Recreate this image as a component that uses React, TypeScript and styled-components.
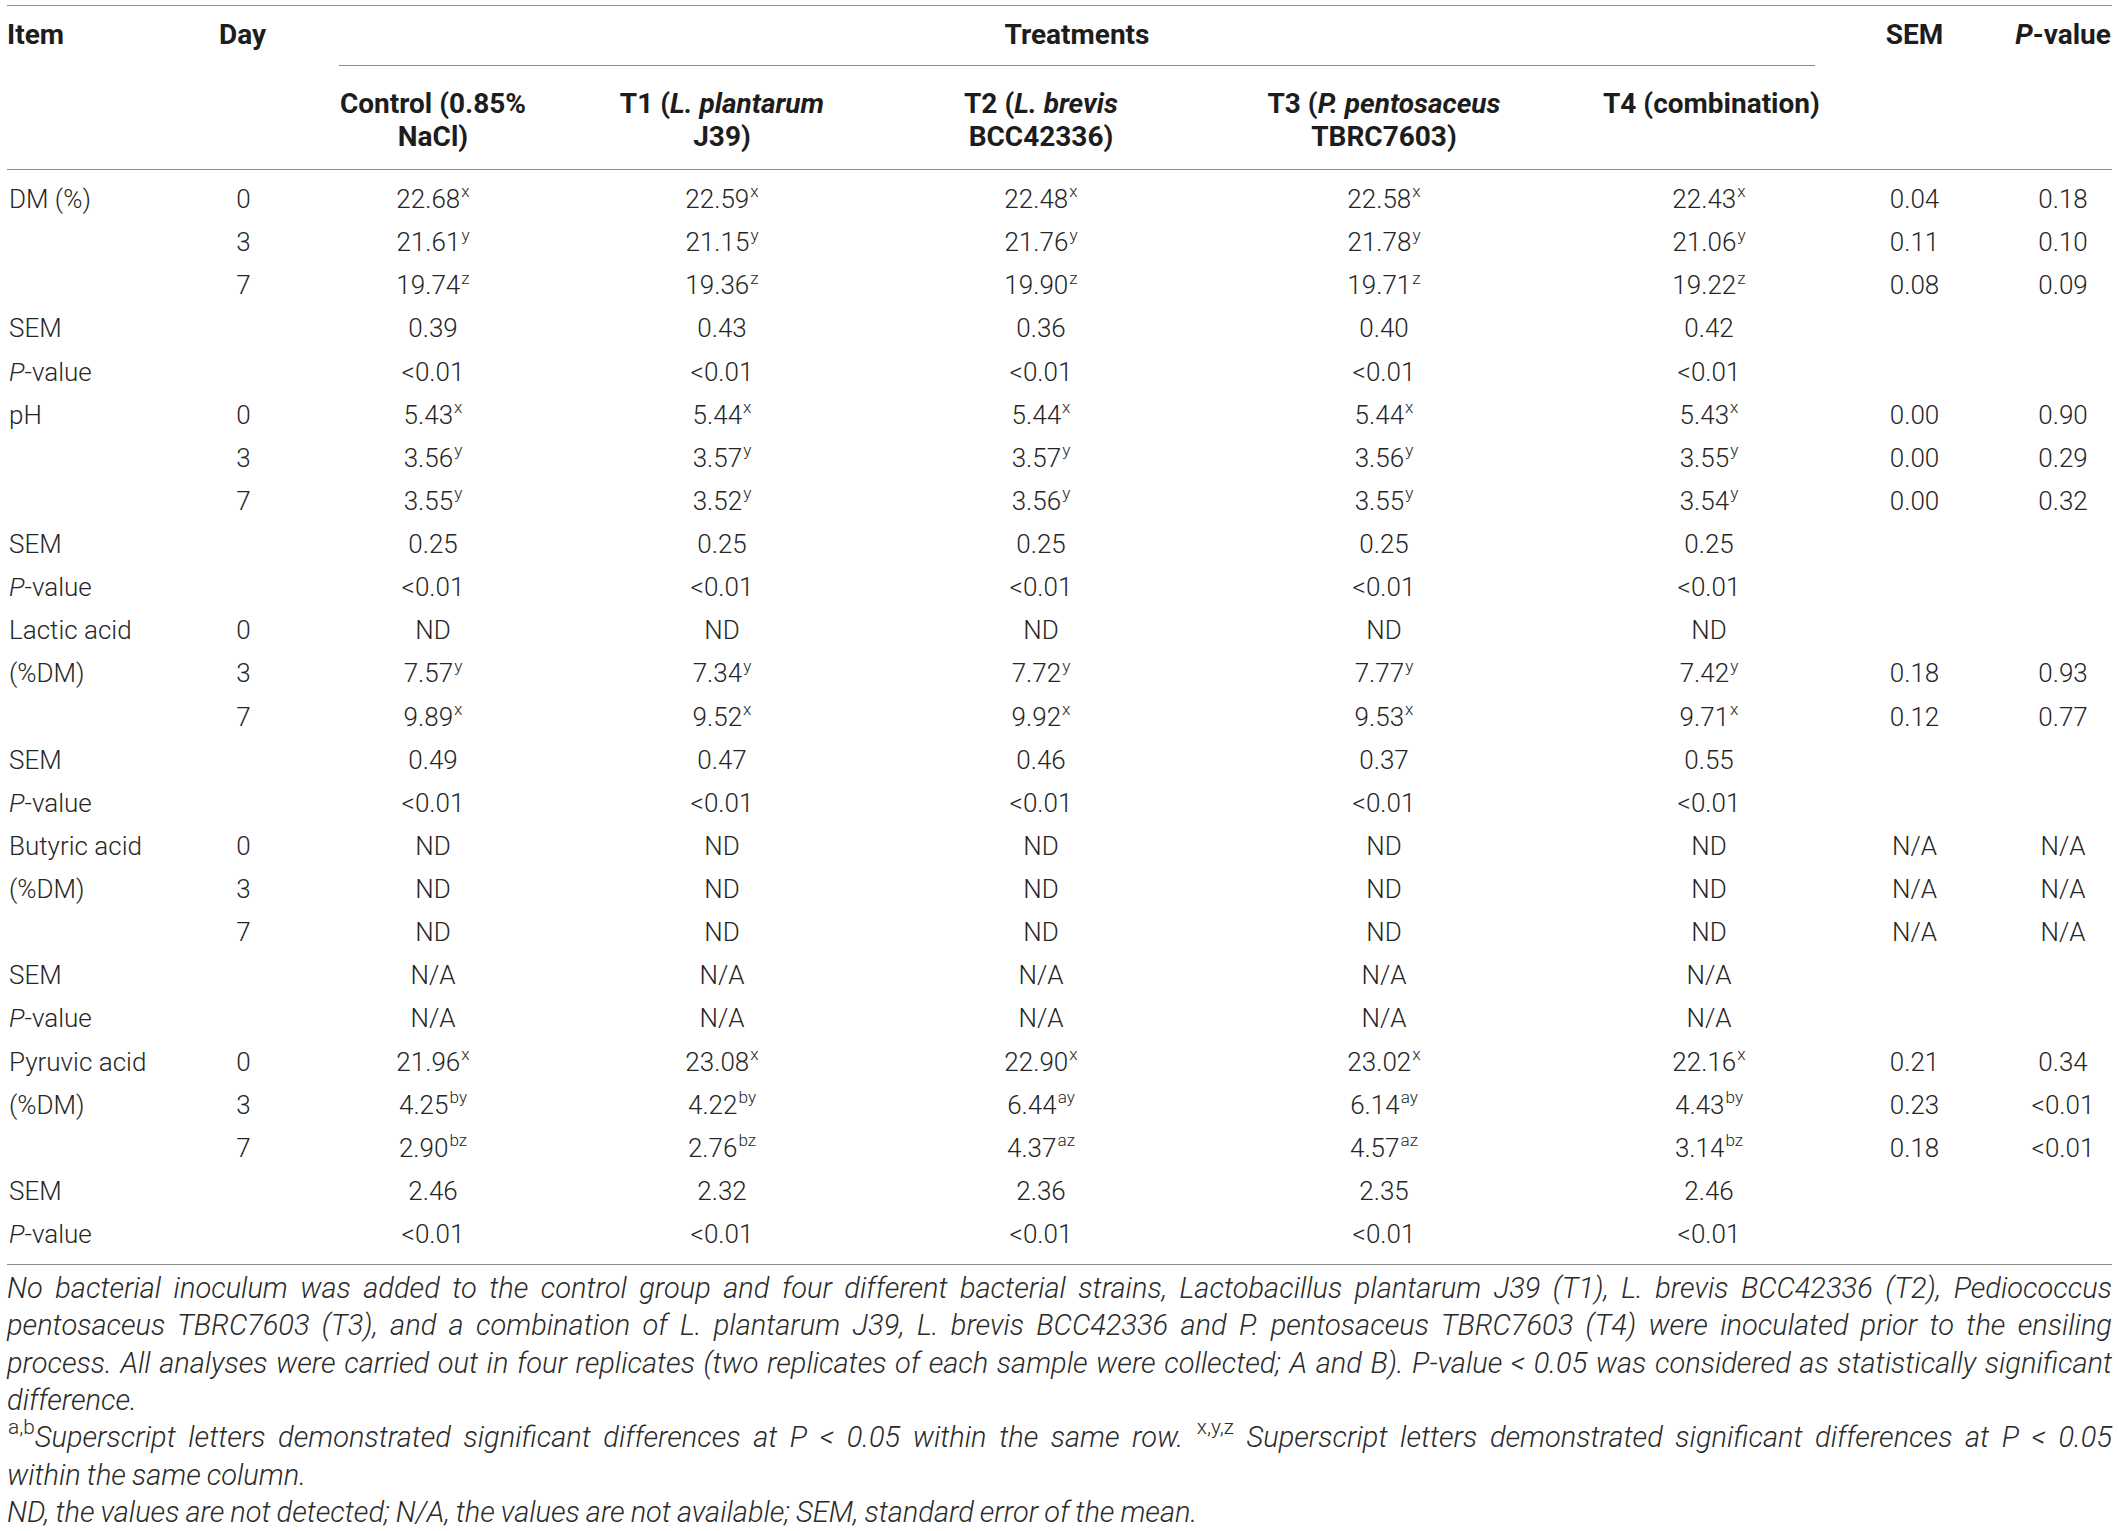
import React from "react";
import styled, { createGlobalStyle } from "styled-components";

const GlobalStyle = createGlobalStyle`
  html, body { margin: 0; padding: 0; background: #ffffff; }
  body {
    font-family: Roboto, "Liberation Sans", Arial, sans-serif;
    color: #262626;
  }
`;

const COLS = "212px 120px 188px 390px 248px 438px 212px 199px 98px";

const Page = styled.div`
  width: 2105px;
  padding: 5px 7px 0 7px;
`;

const Table = styled.div`
  border-top: 1px solid #8e8e8e;
  border-bottom: 1px solid #8e8e8e;
`;

const HeadTop = styled.div`
  display: grid;
  grid-template-columns: ${COLS};
  height: 60px;
  font-size: 28px;
  font-weight: 700;
  color: #1d1d1d;
`;

const HeadSub = styled.div`
  display: grid;
  grid-template-columns: ${COLS};
  padding: 21px 0 16px;
  border-bottom: 1px solid #8e8e8e;
  font-size: 28px;
  font-weight: 700;
  color: #1d1d1d;
  line-height: 33px;
`;

const HeadCell = styled.div<{ $align?: "left" | "center"; $span?: number; $rule?: boolean }>`
  grid-column: span ${(p) => p.$span ?? 1};
  text-align: ${(p) => p.$align ?? "center"};
  line-height: ${(p) => (p.$rule ? "57px" : "58px")};
  white-space: nowrap;
  border-bottom: ${(p) => (p.$rule ? "1px solid #8e8e8e" : "none")};
  box-sizing: border-box;
`;

const SubCell = styled.div`
  text-align: center;
  white-space: nowrap;
`;

const Body = styled.div`
  padding: 8px 0;
`;

const Row = styled.div`
  display: grid;
  grid-template-columns: ${COLS};
  height: 43.14px;
  align-items: center;
  font-size: 26px;
  font-weight: 300;
  line-height: 43px;
`;

const ItemCell = styled.div`
  padding-left: 2px;
  white-space: nowrap;
`;

const DayCell = styled.div`
  width: 49px;
  text-align: center;
`;

const ValueCell = styled.div`
  text-align: center;
  white-space: nowrap;
`;

const Sup = styled.sup<{ $size?: number }>`
  font-size: ${(p) => p.$size ?? 0.66}em;
  line-height: 0;
  vertical-align: baseline;
  position: relative;
  top: -0.62em;
  margin-left: 1px;
  font-style: normal;
`;

const Notes = styled.div`
  padding-top: 5px;
  font-size: 29px;
  font-weight: 300;
  font-style: italic;
  line-height: 37.3px;
  word-spacing: -1px;
  color: #2a2a2a;
`;

const NoteLine = styled.div<{ $justify?: boolean }>`
  text-align: ${(p) => (p.$justify ? "justify" : "left")};
  text-align-last: ${(p) => (p.$justify ? "justify" : "left")};
`;

type RowData = [React.ReactNode, string, string[], string, string];

const P = () => (
  <>
    <i>P</i>-value
  </>
);

const five = (v: string) => [v, v, v, v, v];

const rows: RowData[] = [
  ["DM (%)", "0", ["22.68|x", "22.59|x", "22.48|x", "22.58|x", "22.43|x"], "0.04", "0.18"],
  ["", "3", ["21.61|y", "21.15|y", "21.76|y", "21.78|y", "21.06|y"], "0.11", "0.10"],
  ["", "7", ["19.74|z", "19.36|z", "19.90|z", "19.71|z", "19.22|z"], "0.08", "0.09"],
  ["SEM", "", ["0.39", "0.43", "0.36", "0.40", "0.42"], "", ""],
  [<P />, "", five("<0.01"), "", ""],
  ["pH", "0", ["5.43|x", "5.44|x", "5.44|x", "5.44|x", "5.43|x"], "0.00", "0.90"],
  ["", "3", ["3.56|y", "3.57|y", "3.57|y", "3.56|y", "3.55|y"], "0.00", "0.29"],
  ["", "7", ["3.55|y", "3.52|y", "3.56|y", "3.55|y", "3.54|y"], "0.00", "0.32"],
  ["SEM", "", five("0.25"), "", ""],
  [<P />, "", five("<0.01"), "", ""],
  ["Lactic acid", "0", five("ND"), "", ""],
  ["(%DM)", "3", ["7.57|y", "7.34|y", "7.72|y", "7.77|y", "7.42|y"], "0.18", "0.93"],
  ["", "7", ["9.89|x", "9.52|x", "9.92|x", "9.53|x", "9.71|x"], "0.12", "0.77"],
  ["SEM", "", ["0.49", "0.47", "0.46", "0.37", "0.55"], "", ""],
  [<P />, "", five("<0.01"), "", ""],
  ["Butyric acid", "0", five("ND"), "N/A", "N/A"],
  ["(%DM)", "3", five("ND"), "N/A", "N/A"],
  ["", "7", five("ND"), "N/A", "N/A"],
  ["SEM", "", five("N/A"), "", ""],
  [<P />, "", five("N/A"), "", ""],
  ["Pyruvic acid", "0", ["21.96|x", "23.08|x", "22.90|x", "23.02|x", "22.16|x"], "0.21", "0.34"],
  ["(%DM)", "3", ["4.25|by", "4.22|by", "6.44|ay", "6.14|ay", "4.43|by"], "0.23", "<0.01"],
  ["", "7", ["2.90|bz", "2.76|bz", "4.37|az", "4.57|az", "3.14|bz"], "0.18", "<0.01"],
  ["SEM", "", ["2.46", "2.32", "2.36", "2.35", "2.46"], "", ""],
  [<P />, "", five("<0.01"), "", ""],
];

const Value = ({ v }: { v: string }) => {
  const [num, sup] = v.split("|");
  return (
    <ValueCell>
      {num}
      {sup ? <Sup>{sup}</Sup> : null}
    </ValueCell>
  );
};

export default function App() {
  return (
    <>
      <GlobalStyle />
      <Page>
        <Table>
          <HeadTop>
            <HeadCell $align="left">Item</HeadCell>
            <HeadCell $align="left">Day</HeadCell>
            <HeadCell $span={5} $rule>
              Treatments
            </HeadCell>
            <HeadCell>SEM</HeadCell>
            <HeadCell>
              <P />
            </HeadCell>
          </HeadTop>
          <HeadSub>
            <SubCell />
            <SubCell />
            <SubCell>
              Control (0.85%
              <br />
              NaCl)
            </SubCell>
            <SubCell>
              T1 (<i>L. plantarum</i>
              <br />
              J39)
            </SubCell>
            <SubCell>
              T2 (<i>L. brevis</i>
              <br />
              BCC42336)
            </SubCell>
            <SubCell>
              T3 (<i>P. pentosaceus</i>
              <br />
              TBRC7603)
            </SubCell>
            <SubCell>T4 (combination)</SubCell>
            <SubCell />
            <SubCell />
          </HeadSub>
          <Body>
            {rows.map(([item, day, vals, sem, p], i) => (
              <Row key={i}>
                <ItemCell>{item}</ItemCell>
                <DayCell>{day}</DayCell>
                {vals.map((v, j) => (
                  <Value key={j} v={v} />
                ))}
                <ValueCell>{sem}</ValueCell>
                <ValueCell>{p}</ValueCell>
              </Row>
            ))}
          </Body>
        </Table>
        <Notes>
          <NoteLine $justify>
            No bacterial inoculum was added to the control group and four different bacterial strains, Lactobacillus
            plantarum J39 (T1), L. brevis BCC42336 (T2), Pediococcus
          </NoteLine>
          <NoteLine $justify>
            pentosaceus TBRC7603 (T3), and a combination of L. plantarum J39, L. brevis BCC42336 and P. pentosaceus
            TBRC7603 (T4) were inoculated prior to the ensiling
          </NoteLine>
          <NoteLine $justify>
            process. All analyses were carried out in four replicates (two replicates of each sample were collected; A
            and B). P-value &lt; 0.05 was considered as statistically significant
          </NoteLine>
          <NoteLine>difference.</NoteLine>
          <NoteLine $justify>
            <Sup $size={0.72}>a,b</Sup>Superscript letters demonstrated significant differences at P &lt; 0.05 within
            the same row. <Sup $size={0.72}>x,y,z</Sup> Superscript letters demonstrated significant differences at P
            &lt; 0.05
          </NoteLine>
          <NoteLine>within the same column.</NoteLine>
          <NoteLine>
            ND, the values are not detected; N/A, the values are not available; SEM, standard error of the mean.
          </NoteLine>
        </Notes>
      </Page>
    </>
  );
}
